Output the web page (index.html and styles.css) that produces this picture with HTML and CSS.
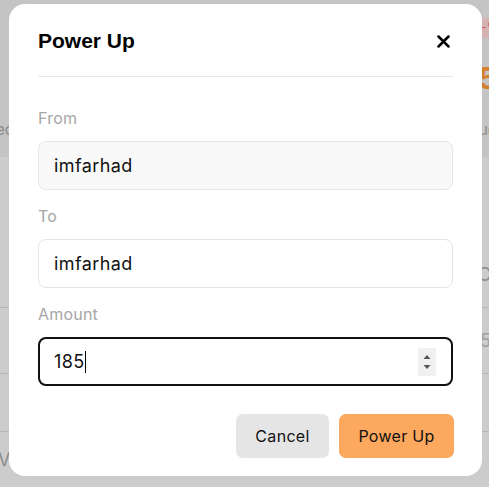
FILE: index.html
```html
<!DOCTYPE html>
<html>
<head>
<meta charset="utf-8">
<link rel="stylesheet" href="styles.css">
</head>
<body>
<div class="page">
  <div class="band">
    <span class="frag frag-pct">-%</span>
    <span class="frag frag-five">5</span>
    <span class="frag frag-ec">ec</span>
    <span class="frag frag-ue">ue</span>
  </div>
  <div class="row row-a"><span class="frag frag-c">C</span></div>
  <div class="row row-b"><span class="frag frag-5">5</span></div>
  <div class="row row-c"></div>
  <div class="row row-d"><span class="frag frag-va">Va</span></div>
</div>

<div class="overlay">
  <div class="modal">
    <div class="modal-head">
      <h2 class="title">Power Up</h2>
      <button class="close" aria-label="Close">
        <svg width="13" height="13" viewBox="0 0 13 13"><path d="M1.5 1.5 L11.5 11.5 M11.5 1.5 L1.5 11.5" stroke="#000" stroke-width="2.5" stroke-linecap="round"/></svg>
      </button>
    </div>
    <div class="divider"></div>
    <div class="fields">
      <div class="field">
        <label class="label">From</label>
        <div class="input input-disabled">imfarhad</div>
      </div>
      <div class="field">
        <label class="label">To</label>
        <div class="input">imfarhad</div>
      </div>
      <div class="field">
        <label class="label">Amount</label>
        <div class="input input-focus">
          <span class="value">185</span><span class="caret"></span>
          <span class="spinner">
            <svg width="10" height="22" viewBox="0 0 10 22"><path d="M1.5 8 L5 4 L8.5 8 Z M1.5 14 L5 18 L8.5 14 Z" fill="#555"/></svg>
          </span>
        </div>
      </div>
    </div>
    <div class="actions">
      <button class="btn btn-cancel">Cancel</button>
      <button class="btn btn-primary">Power Up</button>
    </div>
  </div>
</div>
</body>
</html>
```
FILE: styles.css
```css
* { box-sizing: border-box; }
html, body { margin: 0; padding: 0; }
body {
  width: 489px;
  height: 487px;
  overflow: hidden;
  background: #cccccc;
  font-family: Inter, "Noto Sans", sans-serif;
  position: relative;
}
.page { width: 489px; height: 487px; }
.band {
  height: 157px;
  background: #c4c4c4;
  position: relative;
}
.row {
  border-bottom: 1px solid #b6b6b6;
  position: relative;
}
.row-a { height: 151px; }
.row-b { height: 66px; }
.row-c { height: 58px; }
.row-d { height: 55px; border-bottom: none; }
.frag {
  position: absolute;
  font-size: 16px;
  color: #8a8a8a;
  white-space: nowrap;
}
.frag-pct {
  left: 480px; top: 18px; height: 20px; width: 12px;
  color: #d06060; font-size: 14px; line-height: 20px;
  background: #d6b2b2; padding-left: 0; overflow: hidden;
}
.frag-five { left: 478px; top: 58px; color: #d67f2c; font-size: 30px; font-weight: 700; line-height: 40px; }
.frag-ec { left: -4px; top: 120px; font-size: 15px; }
.frag-ue { left: 479px; top: 120px; font-size: 15px; }
.frag-c { left: 478px; top: 107px; font-size: 18px; }
.frag-5 { left: 480px; top: 22px; font-size: 18px; color: #a0a0a0; }
.frag-va { left: -2px; top: 17px; font-size: 18px; }

.overlay {
  position: absolute;
  inset: 0;
}
.modal {
  position: absolute;
  left: 9px;
  top: 4px;
  width: 473px;
  height: 472px;
  background: #fff;
  border-radius: 16px;
  padding: 23px 29px 18px;
  display: flex;
  flex-direction: column;
}
.modal-head {
  display: flex;
  align-items: center;
  justify-content: space-between;
  height: 28px;
}
.title {
  margin: 0;
  font-family: "Liberation Sans", Arial, sans-serif;
  font-weight: 700;
  font-size: 21px;
  color: #000;
  line-height: 28px;
}
.close {
  border: none;
  background: none;
  padding: 0;
  margin-right: 3px;
  width: 13px;
  height: 13px;
  display: flex;
}
.divider {
  height: 1px;
  background: #e6e6e6;
  margin-top: 21px;
}
.fields {
  display: flex;
  flex-direction: column;
  gap: 14px;
  margin-top: 29px;
}
.field { display: flex; flex-direction: column; gap: 11px; }
.label {
  font-size: 16px;
  line-height: 24px;
  color: #a6a6a6;
  letter-spacing: 0.2px;
}
.input {
  height: 49px;
  border: 1px solid #e5e5e5;
  border-radius: 8px;
  background: #fff;
  padding: 0 15px;
  display: flex;
  align-items: center;
  font-size: 18px;
  letter-spacing: 0.4px;
  color: #111;
}
.input-disabled { background: #f9f9f9; }
.input-focus {
  border: 2px solid #111;
  height: 49px;
  padding: 0 14px;
  position: relative;
}
.caret {
  width: 1px;
  height: 22px;
  background: #000;
  margin-left: 0;
}
.spinner {
  margin-left: auto;
  margin-right: 1px;
  width: 18px;
  height: 28px;
  background: #f0f0f0;
  display: flex;
  align-items: center;
  justify-content: center;
}
.actions {
  margin-top: auto;
  display: flex;
  justify-content: flex-end;
  gap: 10px;
  margin-right: -1px;
}
.btn {
  height: 44px;
  border: none;
  border-radius: 7px;
  font-family: Inter, "Noto Sans", sans-serif;
  font-size: 16px;
  letter-spacing: 0.3px;
  color: #111;
  padding: 0;
}
.btn-cancel { background: #e5e5e5; width: 93px; }
.btn-primary { background: #fca85e; width: 115px; }
```
